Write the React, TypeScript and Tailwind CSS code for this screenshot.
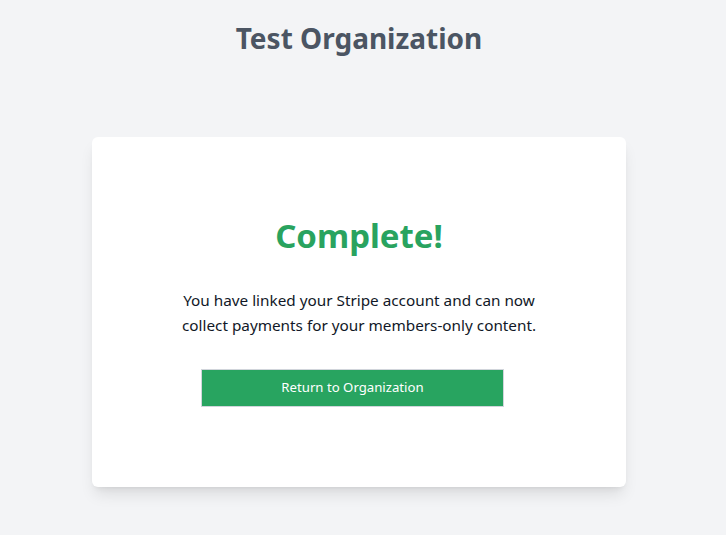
import React from 'react';

export default function App() {
  return (
    <div className="min-h-[535px] w-full bg-[#f3f4f6]" style={{ fontFamily: '"Noto Sans", "Open Sans", sans-serif' }}>
      <div className="w-[718px] flex flex-col items-center">
        <h1 className="pt-[18px] text-[28px] leading-[40px] font-bold text-[#4b5563]">Test Organization</h1>

        <div className="mt-[79px] w-[534px] h-[350px] bg-white rounded-md shadow-lg flex flex-col items-center">
          <h2 className="mt-[76px] text-[33px] leading-[46px] font-bold text-[#29a35f]">Complete!</h2>
          <p className="mt-[29px] text-[15.3px] leading-[25px] text-[#111827] text-center">
            You have linked your Stripe account and can now
            <br />
            collect payments for your members-only content.
          </p>
          <button className="mt-[31px] ml-[-13px] w-[303px] h-[38px] bg-[#28a460] border border-[#d1d5db] text-white text-[13.2px]">
            Return to Organization
          </button>
        </div>
      </div>
    </div>
  );
}
